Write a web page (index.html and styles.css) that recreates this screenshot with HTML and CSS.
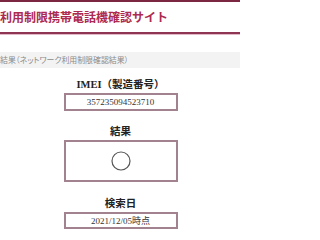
FILE: index.html
```html
<!DOCTYPE html>
<html lang="ja">
<head>
<meta charset="utf-8">
<title>利用制限携帯電話機確認サイト</title>
<link rel="stylesheet" href="styles.css">
</head>
<body>
<header class="site-header">
  <h1 class="site-title">利用制限携帯電話機確認サイト</h1>
</header>
<div class="section-bar">結果（ネットワーク利用制限確認結果）</div>
<main class="result">
  <section class="field field-imei">
    <h2 class="field-label">IMEI（製造番号）</h2>
    <div class="field-box box-imei">357235094523710</div>
  </section>
  <section class="field field-result">
    <h2 class="field-label">結果</h2>
    <div class="field-box box-result">
      <svg class="mark" width="20" height="20" viewBox="0 0 20 20" aria-label="○"><circle cx="10" cy="10" r="9" fill="none" stroke="#555" stroke-width="1.2"/></svg>
    </div>
  </section>
  <section class="field field-date">
    <h2 class="field-label">検索日</h2>
    <div class="field-box box-date">2021/12/05時点</div>
  </section>
</main>
</body>
</html>
```
FILE: styles.css
```css
html, body {
  margin: 0;
  padding: 0;
  background: #ffffff;
}
body {
  width: 240px;
  overflow: hidden;
  font-family: "Liberation Serif", "Noto Sans CJK JP", serif;
}
.site-header {
  border-top: 2px solid #7d2642;
  border-bottom: 2px solid #8f3553;
  box-shadow: 0 1px 0 #e2b9c6;
  height: 30px;
}
.site-title {
  margin: 0;
  padding-left: 0;
  font-family: "Noto Sans CJK JP", sans-serif;
  font-weight: 700;
  font-size: 12px;
  line-height: 30px;
  color: #ad2a50;
  white-space: nowrap;
}
.section-bar {
  margin-top: 18px;
  height: 16px;
  line-height: 16px;
  background: #f3f3f3;
  color: #8a8a8a;
  font-family: "Noto Sans CJK JP", sans-serif;
  font-size: 7.9px;
  font-feature-settings: "palt";
  white-space: nowrap;
}
.result {
  display: flex;
  flex-direction: column;
  align-items: center;
  padding-left: 1px;
}
.field {
  display: flex;
  flex-direction: column;
  align-items: center;
}
.field-imei { margin-top: 10px; }
.field-result { margin-top: 14px; }
.field-date { margin-top: 15px; }
.field-label {
  margin: 0 0 1px;
  font-size: 10.5px;
  line-height: 14px;
  font-weight: 700;
  color: #222;
}
.field-box {
  box-sizing: border-box;
  width: 114px;
  border: 2px solid #a2828f;
  display: flex;
  align-items: center;
  justify-content: center;
  color: #333;
  font-size: 9px;
}
.box-imei { height: 18px; }
.box-result { height: 42px; }
.box-date { height: 17px; }
.mark { display: block; }
```
